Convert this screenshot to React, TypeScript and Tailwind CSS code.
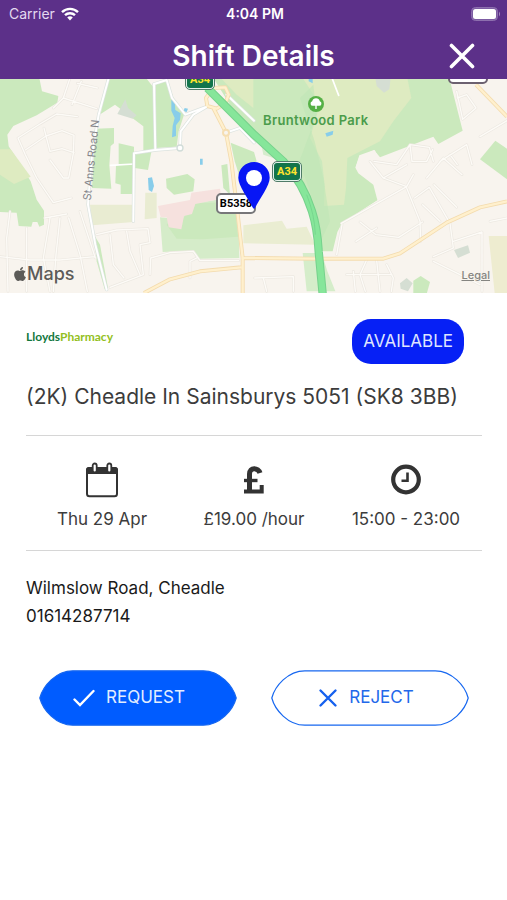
import type { ReactNode } from "react";
import { FaApple } from "react-icons/fa";

const StatusBar = () => {
  return (
    <div className="grid h-7 grid-cols-3 items-center pl-[9px] pr-[6px] text-[14px] leading-5 text-white">
      <div className="flex items-center gap-[6px] text-[#e4daf0]">
        <span>Carrier</span>
        <svg viewBox="0 0 18 14" className="h-[14px] w-[18px]" fill="none" stroke="#fff" strokeWidth="2.4">
          <path d="M1 5.2C5.5.8 12.500.8 17 5.200" />
          <path d="M4 8.200C6.800 5.500 11.200 5.500 14 8.200" />
          <path d="M6.200 10.400C7.800 9 10.200 9 11.800 10.400L9 13.400Z" fill="#fff" stroke="none" />
        </svg>
      </div>
      <div className="text-center font-semibold">4:04 PM</div>
      <svg viewBox="0 0 30 14" className="h-[14px] w-[30px] justify-self-end">
        <rect x="0.500" y="0.500" width="26" height="13" rx="4" fill="#7d5ca3" stroke="#8d6fae" />
        <rect x="2" y="2" width="23" height="10" rx="2.500" fill="#fff" />
        <path d="M28 4.500Q30 7 28 9.500Z" fill="#a58cc0" />
      </svg>
    </div>
  );
};

const Header = () => {
  return (
    <header className="h-[79px] bg-[#5c3089]">
      <StatusBar />
      <div className="grid grid-cols-[1fr_auto_1fr] items-center">
        <h1 className="col-start-2 text-[28px] font-semibold leading-[56px] text-white">Shift Details</h1>
        <button aria-label="Close" className="mr-8 justify-self-end">
          <svg viewBox="0 0 26 26" className="h-[26px] w-[26px]" stroke="#fff" strokeWidth="3.600" strokeLinecap="round">
            <path d="M2.500 2.500L23.500 23.500M23.500 2.500L2.500 23.500" />
          </svg>
        </button>
      </div>
    </header>
  );
};

const sideStreets =
  "M54 180L120 138L170 108L232 116M54 180L76 230L110 300L160 374L214 360M76 216L138 174L186 158L222 172L220 226L206 300L190 300L150 246M132 150L150 220L186 212L222 224M210 0L190 60L160 90M190 60L290 92M216 80L244 10M232 16L292 30M0 536L90 546H180L284 536M30 400L20 480L24 640M80 450V640M150 420L130 540L150 640M180 420L168 530L160 640M206 420L240 530L262 640M134 420L200 408M290 470L350 456L444 452L450 494L420 500L430 590L330 628M330 470L340 560L372 600M380 460L390 520L420 590M450 590L452 540L510 524L580 520L600 548H716M570 600V550L590 540M240 400L286 540" +
  "M1024 436L1220 326L1240 290M1080 432L1128 470L1196 478L1268 432M1068 490L1130 450M1110 250L1150 300L1220 326M1122 250L1190 260L1230 200L1288 208L1300 250M1150 300L1220 260M1230 200L1236 250L1280 250L1298 214M1220 330L1260 430L1262 490M1244 360L1288 328L1350 436M1268 380L1320 430M1302 320L1370 388M1320 250L1400 200L1416 260M1350 230L1372 260M1280 300L1330 240L1386 290M1370 40L1388 124L1428 90L1400 50L1372 60M1440 176L1521 128M1350 436L1360 510L1300 536M1360 490L1446 462V640M1300 550L1440 620M1026 440L1010 530M1100 545L1080 590L1096 640M1040 590H1176M1060 580L1066 640M1130 548L1140 640M1160 560L1180 600L1174 640M764 600L880 596V640M790 600L800 640M1470 430L1521 420";

const localRoads =
  "M326 0L296 110L276 230L264 380L286 500L320 635M462 18L500 6L516 60L556 110L620 86M462 18L466 216L540 210L542 160L580 110L624 84M466 216L402 226L400 430M678 164L720 150L762 194M680 50L762 128";

const bRoads =
  "M432 645L510 604L600 580L724 568M724 540L940 542H1150L1200 526L1340 434L1440 388L1521 370M640 90L678 164L694 250L712 400L728 540V645M622 84L618 60L640 30L676 28L686 50L676 76L650 92L622 84M1428 20L1521 116";

const a34 = "M622 30L762 170L850 250Q910 316 936 400Q952 450 956 520L968 648";

const MapDrawing = () => {
  return (
    <svg viewBox="0 3 1521 642" preserveAspectRatio="xMidYMid slice" className="block h-full w-full" fill="none">
      <rect y="0" width="1521" height="648" fill="#f8f4ee" />

      {/* parks and woods */}
      <g fill="#cbe9bd">
        <path d="M0 0H118L126 40L175 54L172 74L110 112L40 144L22 170L26 205L52 245L92 310L110 365L132 398V440L118 446L112 432H98L94 446L56 444L50 404L0 402Z" />
        <path d="M322 0H438L462 30V218H430V145L400 122L345 80L302 108Z" />
        <path d="M286 152L342 150V196L332 204L328 262L334 332L276 330Z" />
        <path d="M356 196L402 206V348H362V320L346 316L348 262H356Z" />
        <path d="M402 226L454 222L444 276L404 270Z" />
        <path d="M468 14L504 10L520 60L552 110L536 160L530 206L468 210Z" />
        <path d="M498 302L562 288L584 304L580 340L522 350L500 330Z" />
        <path d="M480 418L548 424L552 380L660 364L714 374L718 540L600 542L572 518L488 522Z" fill="#d5ecc9" />
        <path d="M520 424H548L580 376L704 372L714 476L610 484L530 482L500 440Z" />
        <path d="M664 262L682 258L690 350L670 330Z" />
        <path d="M282 470L300 500L324 630L314 634L290 550Z" />
        <path d="M640 0H1348L1388 158L1315 198L1300 176L1140 238L1122 216L1078 232L1066 270L1075 320L1132 366L1026 436L1012 462L998 520H968L920 330L760 180L690 80Z" />
        <path d="M692 194L762 222L770 250L720 300L704 250Z" />
        <path d="M1440 244L1486 188L1521 212V304Z" />
        <path d="M1240 608L1262 594L1290 612L1280 648H1240Z" />
        <path d="M908 525H965L982 580L1006 640H920Z" fill="#d5edca" />
      </g>
      <path d="M1078 236L1124 216L1136 240L1134 366L1080 320L1066 270Z" fill="#f8f4ee" />
      <path d="M1075 286L1120 320L1132 366L1060 410L1030 400V290L1040 240L1070 236L1062 262Z" fill="#cbe9bd" />
      <g fill="#deebc1">
        <path d="M0 214H32L92 296L42 318L0 290Z" />
        <path d="M908 0H1222L1234 60L1180 130L1140 190L1042 240L1038 330L1032 380L972 384L974 320L966 250L930 180L960 80Z" />
        <path d="M662 0H760V90L710 50Z" />
        <path d="M270 380H402V432L276 442Z" fill="#e9ecd2" />
        <path d="M436 344H470V420L434 424Z" fill="#e9ecd2" />
        <path d="M730 442L846 428L860 452L920 446L946 500L730 496Z" fill="#eaedd2" />
        <path d="M1466 474H1521V645H1484Z" fill="#eeecd0" />
      </g>
      <path d="M762 160L850 250L790 230L786 210Z M900 60L940 20L950 110L898 250L950 400L950 516L990 430L970 300L944 190Z" fill="#bfe6b5" opacity="0.600" />
      <path d="M474 384L570 366L574 344L660 332L664 362L586 378L576 408L552 414L544 454L506 448L500 418H482Z" fill="#f6e1de" />
      <path d="M376 64L384 90L410 112L398 122L352 108Z M1126 0H1172L1168 34L1152 44L1130 24Z M1362 516L1404 502L1410 524L1374 540Z M1200 616L1220 600L1238 616L1224 640L1202 632Z" fill="#d5ded3" />
      <g fill="#88cdea">
        <path d="M514 66L524 64L526 96L542 106L540 126L528 142L528 174L516 178L518 144L524 120L514 98Z" />
        <path d="M444 300L456 298L462 324L456 342L446 336Z" />
        <path d="M600 242H608V260H600Z M554 90L564 92L560 102L550 100Z M976 166L1000 158L998 170L980 176Z M926 3H938V16L926 10Z" />
      </g>

      {/* side streets */}
      <g strokeLinejoin="round" strokeLinecap="round">
        <path d={sideStreets} stroke="#ece8e1" strokeWidth="8" />
        <path d={sideStreets} stroke="#fdfbf7" strokeWidth="4" />
        <path d="M332 262L402 258M996 0L1016 52" stroke="#fff" strokeWidth="5" />
      </g>

      {/* local roads */}
      <g strokeLinejoin="round" strokeLinecap="round">
        <path d={localRoads} stroke="#dce3df" strokeWidth="10" />
        <path d={localRoads} stroke="#fff" strokeWidth="6" />
        <circle cx="540" cy="210" r="9" fill="#fff" stroke="#d1dcd8" strokeWidth="4" />
      </g>

      {/* B roads */}
      <g strokeLinejoin="round">
        <path d={bRoads} stroke="#f3dbae" strokeWidth="12" />
        <path d={bRoads} stroke="#fff0cd" strokeWidth="7" />
        <circle cx="678" cy="164" r="9" fill="#f8f4ee" stroke="#f5deb2" strokeWidth="6" />
      </g>

      {/* A34 */}
      <path d={a34} stroke="#76d18c" strokeWidth="25" />
      <path d={a34} stroke="#86e69a" strokeWidth="19" />
      <path d="M920 350Q944 410 946 470" stroke="#6fcd88" strokeWidth="2" />
    </svg>
  );
};

const RoadShield = ({ className }: { className: string }) => {
  return (
    <div className={`absolute h-[21px] w-[30px] rounded-[5px] border border-[#507b68] bg-[#e3f3ea] p-px ${className}`}>
      <div className="flex h-full items-center justify-center rounded-[3px] bg-[#12744b] font-['Roboto',sans-serif] text-[11px] font-bold leading-none text-[#ffe32e]">
        A34
      </div>
    </div>
  );
};

const ShiftMap = () => {
  return (
    <section aria-label="Map" className="relative h-[214px] overflow-hidden">
      <MapDrawing />
      <RoadShield className="-top-[10px] left-[185px]" />
      <RoadShield className="left-[272px] top-[82px]" />
      <div className="absolute -top-4 left-[448px] h-[21px] w-10 rounded-[5px] border-2 border-[#6c6170] bg-white" />

      <div className="absolute left-[263px] top-[17px] flex flex-col items-center text-[#4b9c4b]">
        <svg viewBox="0 0 16 16" className="h-4 w-4">
          <circle cx="8" cy="8" r="8" fill="#55b045" />
          <path d="M7.300 13V9.800H5A2.300 2.300 0 0 1 4.200 5.300A3.900 3.900 0 0 1 11.800 5.300A2.300 2.300 0 0 1 11 9.800H8.700V13Z" fill="#fff" />
        </svg>
        <span className="text-[13px] font-semibold leading-4 tracking-wide">Bruntwood Park</span>
      </div>

      <div className="absolute left-[49px] top-[73px] w-[84px] -rotate-[84deg] whitespace-nowrap text-center text-[11px] leading-4 text-[#85858a]">
        St Anns Road N
      </div>

      <div className="absolute left-[216px] top-[114px] flex h-[21px] w-10 items-center justify-center rounded-[5px] border-2 border-[#77777a] bg-white font-['Roboto',sans-serif] text-[11px] font-bold leading-none text-black">
        B5358
      </div>
      <svg viewBox="0 0 32 48" className="absolute left-[238px] top-[83px] h-12 w-8">
        <path d="M16 0A15.700 15.700 0 0 0 .3 15.700C.3 24 10 36 15 46Q16 47.500 17 46C22 36 31.700 24 31.700 15.700A15.700 15.700 0 0 0 16 0Z" fill="#0716f5" />
        <circle cx="16" cy="16" r="8" fill="#fff" />
      </svg>

      <div className="absolute bottom-[7px] left-[13px] flex items-center text-[#5c5b58]">
        <FaApple className="h-4 w-[14px]" />
        <span className="text-[18px] font-medium leading-6">Maps</span>
      </div>
      <a href="#legal" className="absolute bottom-[10px] right-[17px] text-[11px] font-medium leading-4 text-[#858581] underline">
        Legal
      </a>
    </section>
  );
};

const CalendarIcon = () => {
  return (
    <svg viewBox="0 0 34 36" className="h-9 w-[34px]">
      <rect x="2" y="6" width="30" height="28.300" rx="2.500" fill="#fff" stroke="#333" strokeWidth="2" />
      <path d="M1 12V8Q1 5 4 5H30Q33 5 33 8V12Z" fill="#333" />
      <rect x="7.700" y="1.500" width="4" height="9" rx="2" fill="#fff" stroke="#333" strokeWidth="1.800" />
      <rect x="22.300" y="1.500" width="4" height="9" rx="2" fill="#fff" stroke="#333" strokeWidth="1.800" />
    </svg>
  );
};

const PoundIcon = () => {
  return (
    <svg viewBox="0 0 22 36" className="h-9 w-[22px]" fill="none" stroke="#333" strokeWidth="5">
      <path d="M17 11C15.500 5.500 6.500 4.500 6.500 12V30" />
      <path d="M1 18.500H14.500" strokeWidth="3.400" />
      <path d="M1 29.500H18.700V23" strokeWidth="4" />
    </svg>
  );
};

const ClockIcon = () => {
  return (
    <svg viewBox="0 0 30 36" className="h-9 w-[30px]" fill="none" stroke="#333">
      <circle cx="15" cy="17.500" r="12.800" strokeWidth="4.200" />
      <path d="M16.500 10.500V18.800H10.500" strokeWidth="2.600" />
    </svg>
  );
};

const Fact = ({ icon, children }: { icon: ReactNode; children: ReactNode }) => {
  return (
    <div className="flex flex-col items-center gap-[9px]">
      {icon}
      <span className="text-[17px] leading-6">{children}</span>
    </div>
  );
};

type ActionProps = {
  label: string;
  fill: string;
  className: string;
  icon: ReactNode;
};

const ActionButton = ({ label, fill, className, icon }: ActionProps) => {
  return (
    <button className={`relative flex h-14 items-center justify-center text-[17px] ${className}`}>
      <svg viewBox="0 0 199 56" preserveAspectRatio="none" className="absolute inset-0 h-full w-full">
        <path
          d="M34 .8H165C182 .8 195 16 198.200 28C195 40 182 55.200 165 55.200H34C17 55.200 4 40 .8 28C4 16 17 .8 34 .8Z"
          fill={fill}
          stroke="#1667f0"
          strokeWidth="1.200"
        />
      </svg>
      <span className="relative flex items-center gap-[11px]">
        {icon}
        {label}
      </span>
    </button>
  );
};

const App = () => {
  return (
    <div className="min-h-screen bg-white font-['Inter',sans-serif] text-[#3c3c3c]">
      <Header />
      <ShiftMap />
      <main className="pl-[26px] pr-[25px] pt-[26px]">
        <div className="flex items-start justify-between pr-[18px]">
          <div className="mt-2 font-['Lato',sans-serif] text-[12px] font-bold leading-5 text-[#12783e]">
            Lloyds<span className="text-[#93bf22]">Pharmacy</span>
          </div>
          <span className="rounded-[19px] bg-[#0620f5] px-[11px] text-[17px] leading-[45px] text-[#dfe5ff]">AVAILABLE</span>
        </div>
        <h2 className="mt-[18px] whitespace-nowrap text-[21px] leading-[30px]">(2K) Cheadle In Sainsburys 5051 (SK8 3BB)</h2>

        <div className="mt-[23px] grid grid-cols-3 border-y border-[#d6d6d6] pb-[19px] pt-[26px]">
          <Fact icon={<CalendarIcon />}>Thu 29 Apr</Fact>
          <Fact icon={<PoundIcon />}>£19.00 /hour</Fact>
          <Fact icon={<ClockIcon />}>15:00 - 23:00</Fact>
        </div>

        <address className="mt-[23px] text-[17px] not-italic leading-7 text-[#1a1a1a]">
          <p>Wilmslow Road, Cheadle</p>
          <p>
            <a href="tel:01614287714">01614287714</a>
          </p>
        </address>

        <div className="mt-10 grid grid-cols-2 gap-[34px] px-[13px]">
          <ActionButton
            label="REQUEST"
            fill="#005cff"
            className="pr-[18px] text-[#e3edff]"
            icon={
              <svg viewBox="0 0 22 18" className="h-[18px] w-[22px]" fill="none" stroke="#fff" strokeWidth="2.400" strokeLinecap="round">
                <path d="M1.500 10.500L7 16L20.500 2" />
              </svg>
            }
          />
          <ActionButton
            label="REJECT"
            fill="#fff"
            className="pr-2 text-[#2268ea]"
            icon={
              <svg viewBox="0 0 20 20" className="h-5 w-5" stroke="#1661ee" strokeWidth="2.400" strokeLinecap="round">
                <path d="M2.500 2.500L17.500 17.500M17.500 2.500L2.500 17.500" />
              </svg>
            }
          />
        </div>
      </main>
    </div>
  );
};

export default App;
